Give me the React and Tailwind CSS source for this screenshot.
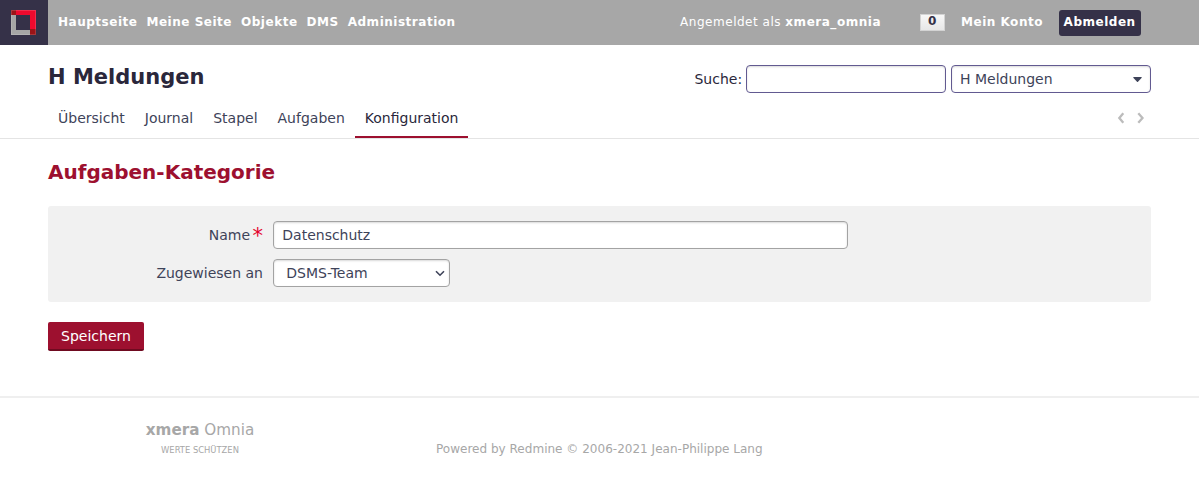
const NAV = ["Hauptseite", "Meine Seite", "Objekte", "DMS", "Administration"];
const TABS = ["Übersicht", "Journal", "Stapel", "Aufgaben"];

function Logo() {
  return (
    <div className="flex h-[45px] w-12 shrink-0 bg-[#353148] pl-[11px] pt-[10px]">
      <svg width="25" height="25" viewBox="0 0 25 25" shapeRendering="crispEdges">
        <path d="M0 5h5v15h15v5H0z" fill="#a6a6a6" />
        <path d="M5 0h20v20h-6V5H5z" fill="#ee0a2e" />
        <path d="M0 0h5v5H0zM19 19h6v6h-6z" fill="#9b1418" />
        <path d="M.5 24.5V.5h24v24z" fill="none" stroke="#fff" strokeOpacity=".15" />
      </svg>
    </div>
  );
}

function TopBar() {
  return (
    <header className="flex h-[45px] bg-[#a7a7a7] text-[12.04px] leading-[14px] tracking-[0.5px] text-white">
      <Logo />
      <nav className="flex gap-[9px] pl-[10px] pt-[15px] font-bold">
        {NAV.map((n) => <a key={n} className="whitespace-nowrap">{n}</a>)}
      </nav>
      <div className="ml-auto flex pr-[58px] font-bold">
        <span className="mr-[39px] whitespace-nowrap pt-[15px]"><span className="font-normal">Angemeldet als </span>xmera_omnia</span>
        <span className="mr-4 mt-[14px] h-[17px] w-[25px] border border-[#d3d3d3] bg-gradient-to-b from-[#f7f7f7] to-[#e7e7e7] text-center leading-[13px] text-[#353148]">0</span>
        <a className="mr-4 w-[82px] whitespace-nowrap pt-[15px]">Mein Konto</a>
        <a className="mt-[10px] h-[26px] w-[82px] whitespace-nowrap rounded-[3px] bg-[#353148] pl-[4.6px] pt-[5px]">Abmelden</a>
      </div>
    </header>
  );
}

export default function App() {
  return (
    <div className="h-[478px] overflow-hidden bg-white font-['DejaVu_Sans',sans-serif] text-[14px] leading-[20px] text-[#3e4359]">
      <TopBar />
      <div className="flex h-[60px] pl-12 pr-[48.4px]">
        <h1 className="pt-[19px] text-[21px] font-bold leading-[26px] text-[#2a273b]">H Meldungen</h1>
        <div className="ml-auto flex pt-5">
          <label className="mr-[4px] pt-1 text-[#2a273b]">Suche:</label>
          <input className="mr-[4.5px] h-7 w-[200px] rounded-[4px] border border-[#625a91] px-2 shadow-[inset_0_1px_2px_rgba(0,0,0,0.15)] outline-none" />
          <div className="flex h-7 w-[200px] items-center justify-between rounded-[4px] border border-[#625a91] pl-[8.4px] pr-2 shadow-[inset_0_1px_2px_rgba(0,0,0,0.15)]">
            <span>H Meldungen</span>
            <svg width="9" height="5" viewBox="0 0 9 5" className="mt-px"><path d="M.6 0h7.8q.6.4.1 1L5 4.7q-.5.4-1 0L.5 1Q0 .4.6 0z" fill="#3e4359" /></svg>
          </div>
        </div>
      </div>
      <div className="flex h-[34px] border-b border-[#e4e4e4] pl-12 pr-[54px]">
        {TABS.map((t) => <a key={t} className="px-[10px] pt-[3px]">{t}</a>)}
        <a className="h-[33px] border-b-2 border-[#9d102f] px-[10px] pt-[3px] text-[#2a273b]">Konfiguration</a>
        <svg width="28" height="12" viewBox="0 0 28 12" className="ml-auto mt-[7px]" fill="none" stroke="#bcbcbc" strokeWidth="2.3">
          <path d="M6.3 1.2 2.3 6l4 4.8M21.3 1.2 25.5 6l-4.2 4.8" />
        </svg>
      </div>
      <main className="px-12">
        <h2 className="pt-[21px] text-[20px] font-bold leading-[24px] text-[#9d102f]">Aufgaben-Kategorie</h2>
        <div className="mt-[22px] flex h-24 flex-col gap-[10px] rounded-[3px] bg-[#f1f1f1] pt-[15px]">
          <div className="flex h-7">
            <label className="flex w-[215px] justify-end pt-1">Name<span className="ml-[2.5px] text-[21px] leading-[22px] text-[#e4002b]">*</span></label>
            <input defaultValue="Datenschutz" className="ml-[10.3px] h-7 w-[575px] rounded-[4px] border border-[#a3a3a3] bg-white px-2 shadow-[inset_0_1px_2px_rgba(0,0,0,0.15)] outline-none" />
          </div>
          <div className="flex h-7">
            <label className="w-[215px] pt-1 text-right">Zugewiesen an</label>
            <div className="ml-[10px] flex h-7 w-[176.5px] items-center justify-between rounded-[4px] border border-[#a3a3a3] bg-white pl-[12.3px] pr-1 shadow-[inset_0_1px_2px_rgba(0,0,0,0.15)]">
              <span>DSMS-Team</span>
              <svg width="10" height="7" viewBox="0 0 10 7" fill="none" stroke="#3e4359" strokeWidth="1.6"><path d="M1 1.2 5 5.2 9 1.2" /></svg>
            </div>
          </div>
        </div>
        <button className="mt-5 block h-[29px] w-24 rounded-[2px] border-b-2 border-[#6f0a20] bg-[#9d102f] pt-px text-[14px] leading-[26px] text-white">Speichern</button>
      </main>
      <footer className="mt-[45px] flex border-t-2 border-[#efefef] pl-[100px] text-[#a7a7a7]">
        <div className="w-[200px] pt-[22px] text-center">
          <div className="text-[15.2px] leading-[20px]"><b>xmera</b> Omnia</div>
          <div className="mt-[4px] text-[8.4px] leading-[12px]">WERTE SCHÜTZEN</div>
        </div>
        <div className="ml-[136px] whitespace-nowrap pt-[43px] text-[12.04px] leading-[16px]">Powered by Redmine © 2006-2021 Jean-Philippe Lang</div>
      </footer>
    </div>
  );
}
